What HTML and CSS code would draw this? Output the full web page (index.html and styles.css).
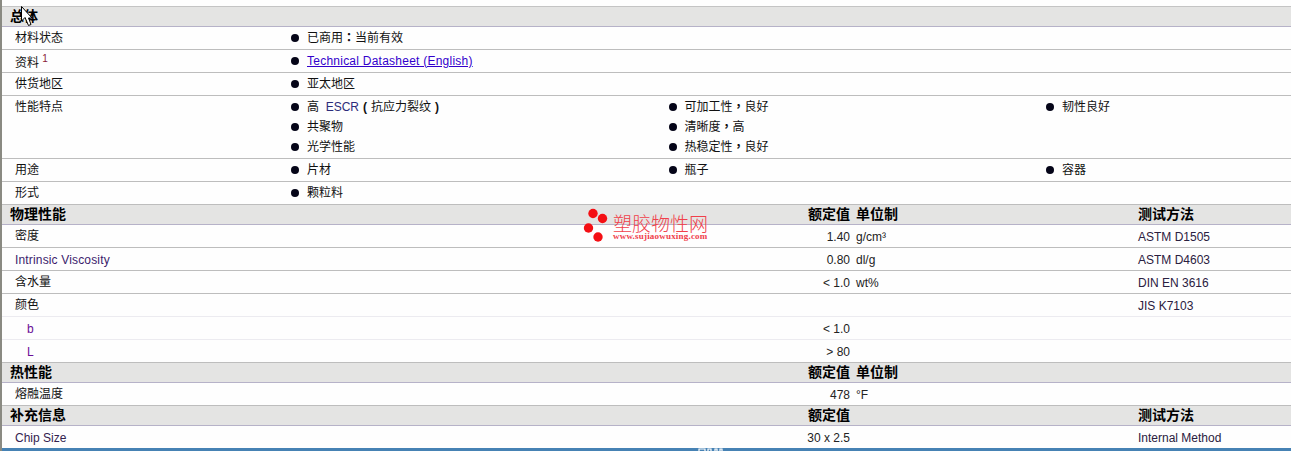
FILE: index.html
```html
<!DOCTYPE html>
<html lang="zh">
<head>
<meta charset="utf-8">
<title>塑胶物性网</title>
<link rel="stylesheet" href="styles.css">
</head>
<body>
<main class="sheet">
  <div class="head first"><span class="head-title">总体</span></div>
  <div class="row info"><span class="label">材料状态</span><ul class="items"><li><span>已商用<span class="punct" lang="zh-Hant">：</span>当前有效</span></li></ul></div>
  <div class="row info"><span class="label low">资料 <sup class="note">1</sup></span><ul class="items"><li><a class="link" href="#">Technical Datasheet (English)</a></li></ul></div>
  <div class="row info"><span class="label">供货地区</span><ul class="items"><li><span>亚太地区</span></li></ul></div>
  <div class="row info tall"><span class="label">性能特点</span><ul class="items"><li><span>高 <span class="latin">&nbsp;ESCR</span><span class="paren">(</span>抗应力裂纹<span class="paren">)</span></span></li><li><span>可加工性<span class="punct" lang="zh-Hant">，</span>良好</span></li><li><span>韧性良好</span></li><li><span>共聚物</span></li><li><span>清晰度<span class="punct" lang="zh-Hant">，</span>高</span></li><li class="blank"></li><li><span>光学性能</span></li><li><span>热稳定性<span class="punct" lang="zh-Hant">，</span>良好</span></li></ul></div>
  <div class="row info"><span class="label">用途</span><ul class="items"><li><span>片材</span></li><li><span>瓶子</span></li><li><span>容器</span></li></ul></div>
  <div class="row info"><span class="label">形式</span><ul class="items"><li><span>颗粒料</span></li></ul></div>

  <div class="head data"><span class="head-title">物理性能</span><span class="head-val">额定值</span><span class="head-unit">单位制</span><span class="head-method">测试方法</span></div>
  <div class="row data"><span class="label up">密度</span><span class="val">1.40</span><span class="unit">g/cm³</span><span class="method">ASTM D1505</span></div>
  <div class="row data"><span class="label en wide">Intrinsic Viscosity</span><span class="val">0.80</span><span class="unit">dl/g</span><span class="method">ASTM D4603</span></div>
  <div class="row data"><span class="label up">含水量</span><span class="val">&lt; 1.0</span><span class="unit">wt%</span><span class="method">DIN EN 3616</span></div>
  <div class="row data soft"><span class="label up">颜色</span><span class="val"></span><span class="unit"></span><span class="method">JIS K7103</span></div>
  <div class="row data soft"><span class="label sub">b</span><span class="val">&lt; 1.0</span><span class="unit"></span><span class="method"></span></div>
  <div class="row data"><span class="label sub">L</span><span class="val">&gt; 80</span><span class="unit"></span><span class="method"></span></div>

  <div class="head data"><span class="head-title">热性能</span><span class="head-val">额定值</span><span class="head-unit">单位制</span><span class="head-method"></span></div>
  <div class="row data"><span class="label up">熔融温度</span><span class="val">478</span><span class="unit">°F</span><span class="method"></span></div>

  <div class="head data"><span class="head-title">补充信息</span><span class="head-val">额定值</span><span class="head-unit"></span><span class="head-method">测试方法</span></div>
  <div class="row data last"><span class="label en chip">Chip Size</span><span class="val">30 x 2.5</span><span class="unit"></span><span class="method">Internal Method</span></div>
</main>
<footer class="bar">
  <svg class="bar-marks" width="26" height="3" viewBox="0 0 26 3" aria-hidden="true"><path d="M1 3V1h6v2M10 3V1h3v2M17 3V1h2v2M22 3V1h2v2" fill="none" stroke="#fff" stroke-width="1.2"/></svg>
</footer>

<div class="mark">
  <svg class="mark-dots" width="28" height="36" viewBox="0 0 28 36" aria-hidden="true"><circle cx="10" cy="5.5" r="4.7"/><circle cx="19.500" cy="10.500" r="4.700"/><circle cx="5.500" cy="20" r="4.700"/><circle cx="15" cy="29" r="4.700"/></svg>
  <div class="mark-text"><span class="mark-name">塑胶物性网</span><span class="mark-url">www.sujiaowuxing.com</span></div>
</div>
<svg class="cursor" width="12" height="21" viewBox="0 0 12 21" aria-hidden="true"><path d="M.5.5V15L4 11.500 7.500 19.500 10 18.500 7.500 12H11Z" fill="#fff" stroke="#000" stroke-width="1"/></svg>
</body>
</html>
```
FILE: styles.css
```css
* { box-sizing: border-box; }
html, body { margin: 0; height: 451px; overflow: hidden; }
body {
  position: relative;
  background: #fefefe;
  color: #111;
  font: 12px/20px "Liberation Sans", "Noto Sans CJK SC", sans-serif;
  border-left: 2px solid #8a8a82;
  padding-top: 6px;
}
.sheet { display: flow-root; }
.head {
  height: 20px;
  border-bottom: 1px solid #b6b2c8;
  background-color: #e4e4e3;
  background-image: radial-gradient(#ececea 0.5px, transparent 0.6px);
  background-size: 4px 4px;
  font: 700 14px/17px "Noto Sans CJK SC", sans-serif;
  color: #000;
  padding-left: 8px;
}
.head.first {
  height: 21px;
  border-top: 1px solid #c4c4c4;
}
.head.data {
  display: grid;
  grid-template-columns: 840px 288px 1fr;
}
.head.data .head-title { grid-column: 1; grid-row: 1; }
.head-val { grid-column: 1; grid-row: 1; justify-self: end; }
.head-unit { padding-left: 6px; }
.row {
  height: 23px;
  border-bottom: 1px solid #bdbdbd;
}
.row.tall { height: 63px; }
.row.soft { border-bottom-color: #ecebf0; }
.row.last { border-bottom: 0; }
.info {
  display: grid;
  grid-template-columns: 287px minmax(0, 1fr);
}
.label { padding-left: 13px; line-height: 23px; }
.low { line-height: 26px; }
.up { line-height: 22px; }
.en { line-height: 25px; color: #3c1c6c; }
.wide { letter-spacing: 0.16px; }
.chip { line-height: 24px; color: #33224f; }
.sub { padding-left: 25px; line-height: 25px; color: #6a0f96; }
.note { color: #8a1b3a; font-size: 10px; line-height: 0; vertical-align: 5px; }
.items {
  list-style: none;
  margin: 0;
  padding: 0;
  display: grid;
  grid-template-columns: 377.5px 377.5px minmax(0, 1fr);
  grid-auto-rows: 20px;
}
.items li {
  display: flex;
  align-items: center;
  gap: 8px;
  height: 21px;
  white-space: pre;
}
.items li::before {
  content: "";
  flex: none;
  width: 8px;
  height: 8px;
  margin-left: 2px;
  border-radius: 50%;
  background: #050518;
}
.items li.blank::before { display: none; }
.latin { color: #2c2c7a; }
.punct { font-family: "Noto Sans CJK TC", sans-serif; font-weight: 700; }
.paren { display: inline-block; width: 12px; text-align: center; font-weight: 700; }
.link { color: #3300cc; letter-spacing: 0.24px; }
.data.row {
  display: grid;
  grid-template-columns: 778px 70px 288px minmax(0, 1fr);
}
.val { text-align: right; line-height: 24px; color: #222; }
.unit { padding-left: 6px; line-height: 24px; color: #222; }
.method { line-height: 24px; color: #2a2040; }
.bar {
  position: absolute;
  left: -2px;
  right: 0;
  top: 448px;
  height: 3px;
  background: #4682b4;
  overflow: hidden;
}
.bar-marks { position: absolute; left: 698px; top: 0; }
.mark {
  position: absolute;
  left: 581px;
  top: 208px;
  display: flex;
  gap: 2px;
}
.mark-dots { fill: #f40f14; }
.mark-text { display: flex; flex-direction: column; padding-top: 5px; }
.mark-name {
  font: 300 19px/19px "Noto Sans CJK SC", sans-serif;
  color: #f0404a;
  white-space: nowrap;
}
.mark-url {
  font: 700 9px/9px "Liberation Serif", serif;
  letter-spacing: 0.2px;
  color: #f0404a;
  white-space: nowrap;
}
.cursor { position: absolute; left: 19px; top: 6px; }
```
